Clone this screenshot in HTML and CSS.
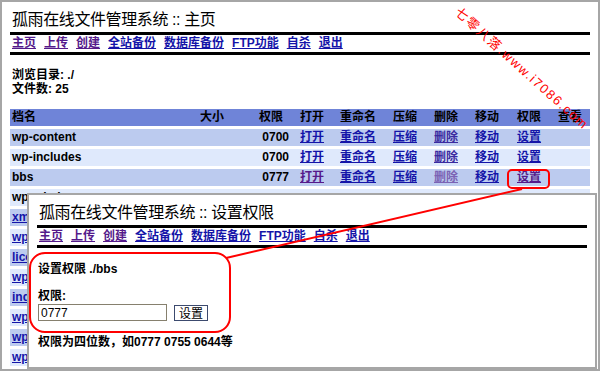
FILE: index.html
```html
<!DOCTYPE html>
<html lang="zh-CN">
<head>
   <meta charset="utf-8">
   <title>孤雨在线文件管理系统 :: 主页</title>
   <link rel="stylesheet" href="styles.css">
</head>
<body>
<div class="frame">
    <h1 class="title">孤雨在线文件管理系统 :: 主页</h1>
    <div class="rule"></div>
    <div class="nav">
        <a href="#" class="seen">主页</a>
        <a href="#" class="seen">上传</a>
        <a href="#" class="seen">创建</a>
        <a href="#">全站备份</a>
        <a href="#">数据库备份</a>
        <a href="#">FTP功能</a>
        <a href="#">自杀</a>
        <a href="#">退出</a>
    </div>
    <div class="rule"></div>
    <div class="info">
        <div>浏览目录: ./</div>
        <div>文件数: 25</div>
    </div>
    <table class="files">
        <colgroup>
            <col class="c_name"><col class="c_size"><col class="c_perm"><col class="c_open">
            <col class="c_rename"><col class="c_zip"><col class="c_del"><col class="c_move">
            <col class="c_chmod"><col class="c_view">
        </colgroup>
        <tr class="head">
            <td>档名</td><td>大小</td><td>权限</td><td>打开</td><td>重命名</td>
            <td>压缩</td><td>删除</td><td>移动</td><td>权限</td><td>查看</td>
        </tr>
        <tr class="dark">
            <td>wp-content</td><td></td><td class="perm">0700</td><td><a href="#">打开</a></td><td><a href="#">重命名</a></td>
            <td><a href="#">压缩</a></td><td><a href="#" class="del">删除</a></td><td><a href="#">移动</a></td><td><a href="#">设置</a></td><td></td>
        </tr>
        <tr class="light">
            <td>wp-includes</td><td></td><td class="perm">0700</td><td><a href="#">打开</a></td><td><a href="#">重命名</a></td>
            <td><a href="#">压缩</a></td><td><a href="#" class="del">删除</a></td><td><a href="#">移动</a></td><td><a href="#">设置</a></td><td></td>
        </tr>
        <tr class="dark">
            <td>bbs</td><td></td><td class="perm">0777</td><td><a href="#" class="seen">打开</a></td><td><a href="#">重命名</a></td>
            <td><a href="#">压缩</a></td><td><a href="#" class="seen_light">删除</a></td><td><a href="#">移动</a></td><td><a href="#" class="seen">设置</a></td><td></td>
        </tr>
        <tr class="light"><td>wp-admin</td><td></td><td></td><td></td><td></td><td></td><td></td><td></td><td></td><td></td></tr>
        <tr class="dark"><td><a href="#">xmlrpc.php</a></td><td></td><td></td><td></td><td></td><td></td><td></td><td></td><td></td><td></td></tr>
        <tr class="light"><td><a href="#">wp-trackback.php</a></td><td></td><td></td><td></td><td></td><td></td><td></td><td></td><td></td><td></td></tr>
        <tr class="dark"><td><a href="#">license.txt</a></td><td></td><td></td><td></td><td></td><td></td><td></td><td></td><td></td><td></td></tr>
        <tr class="light"><td><a href="#">wp-settings.php</a></td><td></td><td></td><td></td><td></td><td></td><td></td><td></td><td></td><td></td></tr>
        <tr class="dark"><td><a href="#">index.php</a></td><td></td><td></td><td></td><td></td><td></td><td></td><td></td><td></td><td></td></tr>
        <tr class="light"><td><a href="#">wp-login.php</a></td><td></td><td></td><td></td><td></td><td></td><td></td><td></td><td></td><td></td></tr>
        <tr class="dark"><td><a href="#">wp-mail.php</a></td><td></td><td></td><td></td><td></td><td></td><td></td><td></td><td></td><td></td></tr>
        <tr class="light"><td><a href="#">wp-config.php</a></td><td></td><td></td><td></td><td></td><td></td><td></td><td></td><td></td><td></td></tr>
    </table>

    <div class="popup">
        <h1 class="title">孤雨在线文件管理系统 :: 设置权限</h1>
        <div class="rule"></div>
        <div class="nav">
            <a href="#" class="seen">主页</a>
            <a href="#" class="seen">上传</a>
            <a href="#" class="seen">创建</a>
            <a href="#">全站备份</a>
            <a href="#">数据库备份</a>
            <a href="#">FTP功能</a>
            <a href="#">自杀</a>
            <a href="#">退出</a>
        </div>
        <div class="rule"></div>
        <div class="chmod">
            <p class="chmod_path">设置权限 ./bbs</p>
            <p class="chmod_label">权限:</p>
            <div class="chmod_row">
                <input type="text" class="chmod_input" value="0777">
                <button class="chmod_btn">设置</button>
            </div>
            <p class="chmod_hint">权限为四位数，如0777 0755 0644等</p>
        </div>
    </div>

    <svg class="marks" width="600" height="371" viewBox="0 0 600 371">
        <rect x="508" y="170" width="41" height="18" rx="4" fill="none" stroke="#f00" stroke-width="2"/>
        <rect x="30" y="253" width="200" height="79" rx="15" fill="none" stroke="#f00" stroke-width="2"/>
        <line x1="522" y1="189" x2="226" y2="258" stroke="#f00" stroke-width="2"/>
        <text class="watermark" transform="translate(457,10) rotate(42)" y="4.5" textLength="173" lengthAdjust="spacing">七零八落.www.i7086.com</text>
    </svg>
</div>
</body>
</html>
```

FILE: styles.css
```css
body {
    margin: 0;
    overflow: hidden;
    background-color: #ffffff;
    font-family: "Liberation Sans", "Noto Sans CJK SC", sans-serif;
    font-size: 12px;
    font-weight: bold;
    color: #000000;
}

.frame {
    position: relative;
    width: 600px;
    height: 371px;
    box-sizing: border-box;
    border: 2px solid #a6a6a6;
    padding: 8px;
    overflow: hidden;
}

.title {
    margin: 0 0 2px 0;
    padding-left: 2px;
    font-size: 16px;
    line-height: 20px;
    font-weight: normal;
    letter-spacing: -0.4px;
    white-space: nowrap;
}

.rule {
    height: 3px;
    background-color: #000000;
}

.nav {
    display: flex;
    gap: 8px;
    padding-left: 2px;
    line-height: 17px;
}

a {
    color: #1414a8;
    text-decoration: underline;
}

a.seen {
    color: #551a8b;
}

a.seen_light {
    color: #7a62b4;
}

a.del {
    color: #3a2aa0;
}

.info {
    margin-top: 13px;
    padding-left: 2px;
    line-height: 14px;
}

/* file list */
.files {
    margin-top: 10px;
    width: 580px;
    table-layout: fixed;
    border-collapse: separate;
    border-spacing: 0 3px;
}

.files td {
    padding: 0 2px;
    height: 17px;
    line-height: 17px;
    white-space: nowrap;
    overflow: hidden;
}

.c_name { width: 188px; }
.c_size { width: 59px; }
.c_perm { width: 41px; }
.c_open { width: 40px; }
.c_rename { width: 53px; }
.c_zip { width: 41px; }
.c_del { width: 41px; }
.c_move { width: 42px; }
.c_chmod { width: 41px; }
.c_view { width: 34px; }

.files td.perm {
    text-align: right;
    padding-right: 9px;
}

.head td {
    background-color: #6f84d8;
}

.dark td {
    background-color: #bccbef;
}

.light td {
    background-color: #dfe9fc;
}

/* second window, pasted over the first */
.popup {
    position: absolute;
    left: 25px;
    top: 191px;
    width: 570px;
    height: 176px;
    box-sizing: border-box;
    border: 2px solid #a6a6a6;
    padding: 8px;
    background-color: #ffffff;
    overflow: hidden;
}

.chmod {
    padding-left: 1px;
}

.chmod p {
    margin: 0;
    line-height: 14px;
}

.chmod_path {
    margin-top: 14px !important;
}

.chmod_label {
    margin-top: 13px !important;
}

.chmod_row {
    display: flex;
    align-items: flex-start;
    margin-top: 1px;
    height: 17px;
}

.chmod_input {
    width: 129px;
    height: 17px;
    box-sizing: border-box;
    margin: 0;
    padding: 0 2px;
    border: 1px solid #86806e;
    font-family: "Liberation Sans", sans-serif;
    font-size: 12px;
    font-weight: normal;
    color: #000000;
}

.chmod_btn {
    width: 34px;
    height: 16px;
    margin: 1px 0 0 7px;
    padding: 0;
    border: 1px solid #3c4a6e;
    background-color: #ffffff;
    font-family: "Noto Sans CJK SC", sans-serif;
    font-size: 12px;
    font-weight: normal;
    line-height: 14px;
    color: #000000;
}

.chmod_hint {
    margin-top: 14px !important;
}

/* red notes drawn over the screenshot */
.marks {
    position: absolute;
    left: -2px;
    top: -2px;
}

.watermark {
    fill: #ff0000;
    font-family: "Liberation Sans", "Noto Sans CJK SC", sans-serif;
    font-size: 13px;
    font-weight: normal;
}
```
